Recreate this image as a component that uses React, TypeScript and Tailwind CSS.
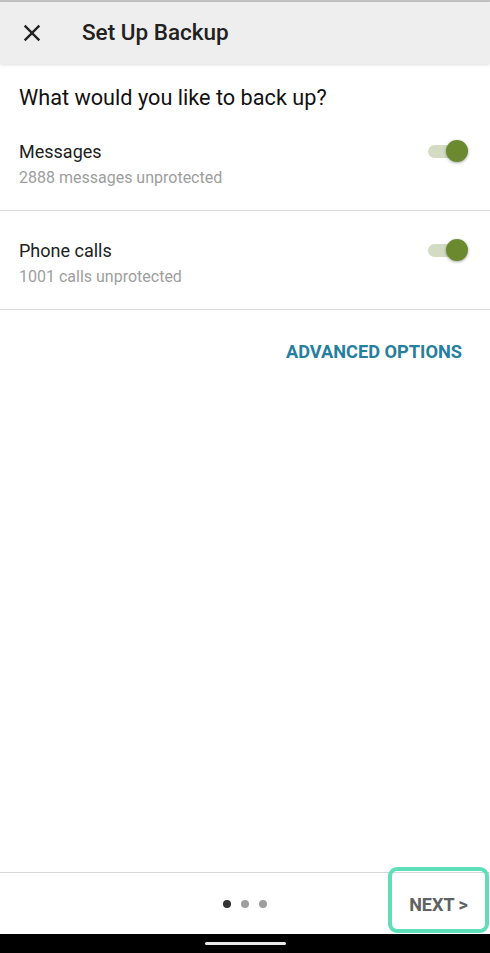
import React from "react";

function Toggle() {
  return (
    <div className="relative -mt-px h-6 w-[40px] shrink-0">
      <div className="absolute left-0 right-[2px] top-[6px] h-[13px] rounded-full bg-[#d3dcc2]" />
      <div className="absolute right-0 top-px h-[22px] w-[22px] rounded-full bg-[#6b8a30] shadow-[0_1px_3px_rgba(0,0,0,0.35)]" />
    </div>
  );
}

function BackupRow({ title, sub, pt }: { title: string; sub: string; pt: string }) {
  return (
    <div className={`flex items-start justify-between border-b border-[#dcdcdc] pb-[22px] pl-[19px] pr-[22px] ${pt}`}>
      <div>
        <div className="text-[18px] leading-6 text-[#212121]">{title}</div>
        <div className="mt-1 text-[16px] leading-5 text-[#9e9e9e]">{sub}</div>
      </div>
      <Toggle />
    </div>
  );
}

export default function App() {
  return (
    <div
      className="flex h-[953px] w-[490px] flex-col overflow-hidden bg-white"
      style={{ fontFamily: "Roboto, 'Noto Sans', sans-serif" }}
    >
      {/* status strip + app bar */}
      <div className="h-[2px] bg-[#c2c2c2]" />
      <header className="relative z-10 flex h-[62px] items-center bg-[#eeeeee] shadow-[0_1px_3px_rgba(0,0,0,0.12)]">
        <svg className="ml-[18px]" width="28" height="28" viewBox="0 0 24 24" fill="#212121">
          <path d="M19 6.41L17.59 5 12 10.59 6.41 5 5 6.41 10.59 12 5 17.59 6.41 19 12 13.41 17.59 19 19 17.59 13.41 12z" />
        </svg>
        <h1 className="ml-[36px] text-[22.5px] font-medium text-[#212121]">Set Up Backup</h1>
      </header>

      <main className="flex-1">
        <h2 className="pl-[19px] pt-5 text-[21.7px] leading-7 text-[#111111]">
          What would you like to back up?
        </h2>
        <BackupRow title="Messages" sub="2888 messages unprotected" pt="pt-[28px]" />
        <BackupRow title="Phone calls" sub="1001 calls unprotected" pt="pt-[28px]" />
        <div className="flex justify-end pr-[28px] pt-[30px]">
          <button className="text-[18.2px] font-bold leading-6 text-[#267ea0]">
            ADVANCED OPTIONS
          </button>
        </div>
      </main>

      {/* footer */}
      <footer className="relative flex h-[62px] items-center border-t border-[#d6d6d6]">
        <div className="flex flex-1 justify-center gap-[10px] pl-[101px]">
          <span className="h-2 w-2 rounded-full bg-[#333333]" />
          <span className="h-2 w-2 rounded-full bg-[#9e9e9e]" />
          <span className="h-2 w-2 rounded-full bg-[#9e9e9e]" />
        </div>
        <div className="relative -mt-[8px] mr-px flex h-[66px] w-[101px] items-center justify-center rounded-[9px] border-4 border-[#5fdfb8] pt-[9px]">
          <span className="text-[18px] font-bold text-[#616161]">NEXT &gt;</span>
        </div>
      </footer>

      {/* nav bar */}
      <div className="flex h-[19px] items-start justify-center bg-black pt-[8px]">
        <div className="h-[3px] w-[81px] rounded-full bg-[#e8e8e8]" />
      </div>
    </div>
  );
}
